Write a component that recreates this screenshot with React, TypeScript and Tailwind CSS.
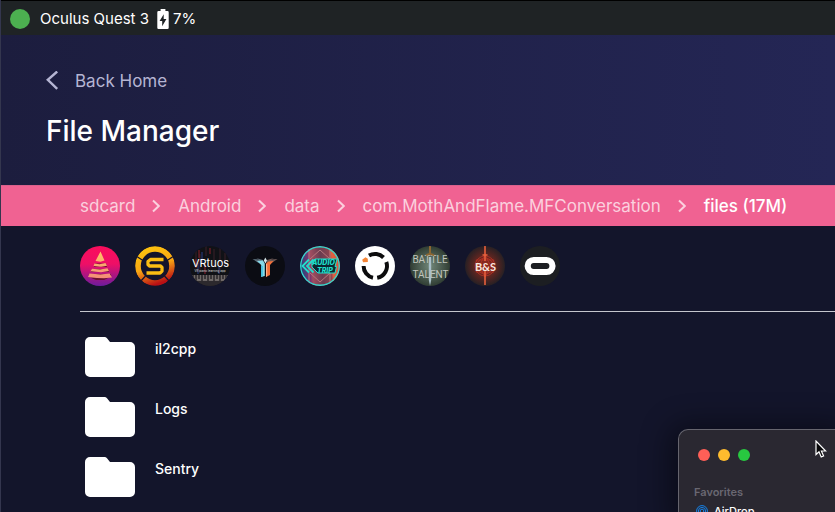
import type { ReactNode } from "react";

const crumbs = ["sdcard", "Android", "data", "com.MothAndFlame.MFConversation"];
const folders = ["il2cpp", "Logs", "Sentry"];

function Chevron() {
  return (
    <svg viewBox="0 0 8 14" className="h-3.5 w-2 shrink-0" fill="none" stroke="#fbd0de" strokeWidth="2" aria-hidden="true">
      <path d="M1 1.5 6.8 7 1 12.5" />
    </svg>
  );
}

function BatteryIcon() {
  return (
    <svg viewBox="0 0 12 20" className="h-5 w-3 shrink-0" aria-hidden="true">
      <path
        fill="#fff"
        fillRule="evenodd"
        d="M3.6 0h4.8v2h2.1a1.2 1.2 0 0 1 1.2 1.2v15.6a1.2 1.2 0 0 1-1.2 1.2h-9a1.2 1.2 0 0 1-1.2-1.2V3.2A1.2 1.2 0 0 1 1.5 2h2.1zM6.700 5.200 2.600 12H5.200v5.200L9.400 10H6.700z"
      />
    </svg>
  );
}

function FolderIcon() {
  return (
    <svg viewBox="0 0 50 40" className="h-10 w-[50px] shrink-0" aria-hidden="true">
      <path fill="#fff" d="M5 0h14.500q1.500 0 2.500 1.200L25 5h20a5 5 0 0 1 5 5v25a5 5 0 0 1-5 5H5a5 5 0 0 1-5-5V5a5 5 0 0 1 5-5z" />
    </svg>
  );
}

const apps: { name: string; art: ReactNode }[] = [
  {
    name: "Pyramid",
    art: (
      <>
        <defs>
          <linearGradient id="pyrBg" x1="0" y1="0" x2="0" y2="1">
            <stop offset="0" stopColor="#fb0d5c" />
            <stop offset=".45" stopColor="#ee0f66" />
            <stop offset="1" stopColor="#6d1b9c" />
          </linearGradient>
          <linearGradient id="pyrFg" x1="0" y1="0" x2="0" y2="1">
            <stop offset="0" stopColor="#ffc465" />
            <stop offset="1" stopColor="#f48b78" />
          </linearGradient>
        </defs>
        <rect width="40" height="40" fill="url(#pyrBg)" />
        <path fill="#6a1230" d="M15 17.500h11l1 3.500-7-.5-6 .5zM12 23h16l1 3-9-.5-9 .5zM9.500 28h21l1 1.500-11 1-12-.5zM10 31.500l20-.5-6 3h-8z" />
        <path fill="url(#pyrFg)" d="m20.500 5.500 4 9-4 1.300-5-.8zM14.500 17.500l5 .8 6-1.300 1.500 2.700-6 1-7.500-.7zM12 22.800l8 .7 7.500-1.200 1.500 2.700-8 1.200-10.500-.9zM9.500 27.500l11 1 9-1 2.500 4-8 .8-7-.4-9-.9z" />
      </>
    ),
  },
  {
    name: "Synth",
    art: (
      <>
        <defs>
          <linearGradient id="synRing" x1=".3" y1="0" x2=".65" y2="1">
            <stop offset="0" stopColor="#fdc00f" />
            <stop offset=".5" stopColor="#f9a613" />
            <stop offset="1" stopColor="#b90f14" />
          </linearGradient>
        </defs>
        <rect width="40" height="40" fill="#15142b" />
        <circle cx="20" cy="20" r="17" fill="none" stroke="url(#synRing)" strokeWidth="5.600" />
        <path d="m1 10 7 4.500M39 10l-7 4.500M5 36l5.500-6M35 36l-5.500-6" stroke="#15142b" strokeWidth="1.300" />
        <path fill="none" stroke="#fcbd13" strokeWidth="3.300" strokeLinejoin="round" d="M28.500 13.500H15.500L13 15.500v3l1.500 1.500h11L27 21.500v3.500l-2 2H11.500" />
      </>
    ),
  },
  {
    name: "VRtuos",
    art: (
      <>
        <rect width="40" height="40" fill="#101116" />
        <path d="M6 2v19M10 8v18M16 0v10M24 3v18M30 1v24M35 7v13" stroke="#3b2128" strokeWidth="1" />
        <path d="M9 4v8M15 18v10M6 13v9M20 2v6" stroke="#8e2029" strokeWidth="1" />
        <path d="M12 6v11M8 17v11M29 21v7" stroke="#263f83" strokeWidth="1" />
        <rect y="29" width="40" height="6" fill="#6f6968" />
        <path d="M3 29v4M6 29v6M9 29v4M12 29v6M15 29v4M18 29v6M21 29v4M24 29v6M27 29v4M30 29v6M33 29v4M36 29v6" stroke="#242225" strokeWidth="1.400" />
        <path d="M0 35h40v5H0z" fill="#2c292d" />
        <text x="20.500" y="21" textAnchor="middle" fontFamily="Inter, sans-serif" fontSize="11" fill="#fff">VRtuos</text>
        <text x="20" y="25.500" textAnchor="middle" fontFamily="Inter, sans-serif" fontSize="3" fill="#ddd">VR piano learning app</text>
      </>
    ),
  },
  {
    name: "Twin Blades",
    art: (
      <>
        <rect width="40" height="40" fill="#0b0c13" />
        <path fill="#5b6d79" d="m7.500 13 6.500.5-3-1.500 7 2 .5 4-5-1z" />
        <path fill="#6e5a56" d="m32.500 13-6.500.5 3-1.500-7 2-.5 4 5-1z" />
        <path fill="#86d9e8" d="m12 15 6-.5 1.800 3V30l-3.600 1V19z" />
        <path fill="#f3703a" d="m28.500 15-5 .5-2.500 2V31l4-2V19z" />
        <path fill="#3fc3e4" d="M16.200 20h1.600v10l-1.600 1z" />
        <path fill="#ffb089" d="M21 18h1.200v12L21 31z" />
        <path fill="#d6e5e8" d="m20.300 11.500 1.700 3-1.500 3-1.700-3z" />
      </>
    ),
  },
  {
    name: "Audio Trip",
    art: (
      <>
        <defs>
          <linearGradient id="audBg" x1="0" y1=".2" x2="1" y2=".1">
            <stop offset="0" stopColor="#27427c" />
            <stop offset=".2" stopColor="#7c3570" />
            <stop offset=".26" stopColor="#a04d60" />
            <stop offset=".5" stopColor="#6a3c50" />
            <stop offset=".72" stopColor="#8c4450" />
            <stop offset=".78" stopColor="#e0603f" />
            <stop offset="1" stopColor="#d8503f" />
          </linearGradient>
        </defs>
        <rect width="40" height="40" fill="url(#audBg)" />
        <path d="M9 0v40M30 0v40M10 13 20 4l10 9M10 27l10 9 10-9" fill="none" stroke="#b6777d" strokeWidth="1" />
        <path fill="#0c2630" stroke="#20dfcc" strokeWidth="1" d="m12 17 3-4h22l-2 7.500h1.500l-1.500 6.500H18l-6-6z" />
        <path d="m9 13.500-6.500 6.500 6.500 6.500M13.500 13.500l-6.500 6.500 6.500 6.500" fill="none" stroke="#20dfcc" strokeWidth="1.800" />
        <g fontFamily="Inter, sans-serif" fontWeight="800" fontStyle="italic" fontSize="7" fill="#20dfcc">
          <text x="12" y="19">AUDIO</text>
          <text x="17" y="27">TRIP</text>
        </g>
        <circle cx="20" cy="20" r="19.300" fill="none" stroke="#34d7cc" strokeWidth="1.400" />
      </>
    ),
  },
  {
    name: "Ring",
    art: (
      <>
        <rect width="40" height="40" fill="#fff" />
        <g fill="none" stroke="#0c0c0d" strokeWidth="4">
          <path d="M14 9.600A12 12 0 0 1 28.500 11.500" />
          <path d="M31.300 16A12 12 0 0 1 22.200 31.800" />
          <path d="M18 31.800A12 12 0 0 1 8.600 20" />
        </g>
        <path fill="#f58434" d="m10.500 11.300 2.300 1.500v3.200l-4.800.2-.8-2.400z" />
      </>
    ),
  },
  {
    name: "Battle Talent",
    art: (
      <>
        <defs>
          <radialGradient id="batBg">
            <stop offset="0" stopColor="#718779" />
            <stop offset="1" stopColor="#303d33" />
          </radialGradient>
        </defs>
        <rect width="40" height="40" fill="url(#batBg)" />
        <g fontFamily="Roboto, sans-serif" fontSize="10" fill="#c0c5bd" textAnchor="middle">
          <text x="20" y="17">BATTLE</text>
          <text x="20.500" y="32">TALENT</text>
        </g>
        <path d="M18.800 11h2.400v23L20 40l-1.200-6z" fill="#a9bfc9" />
        <path d="M20 0v9M16 9.500q4-3 8 0" stroke="#8c6631" strokeWidth="2" fill="none" />
      </>
    ),
  },
  {
    name: "Blade and Sorcery",
    art: (
      <>
        <defs>
          <radialGradient id="bsBg">
            <stop offset="0" stopColor="#a12b1c" />
            <stop offset=".5" stopColor="#632620" />
            <stop offset="1" stopColor="#272024" />
          </radialGradient>
        </defs>
        <rect width="40" height="40" fill="url(#bsBg)" />
        <g fill="none" stroke="#bd3425" strokeWidth=".7">
          <circle cx="20" cy="20" r="10" />
          <circle cx="20" cy="20" r="8" />
          <path d="m20 9 9 17H11zM20 31l9-17H11z" />
        </g>
        <path d="M20 0v15M20 25v14M17.500 9h5" stroke="#e7603d" strokeWidth="1.600" />
        <text x="20.500" y="24.500" textAnchor="middle" fontFamily="Lato, sans-serif" fontSize="11" fontWeight="700" fill="#f8e7df">B&amp;S</text>
      </>
    ),
  },
  {
    name: "Oculus",
    art: (
      <>
        <rect width="40" height="40" fill="#1c1e22" />
        <rect x="7.700" y="14" width="24.800" height="12" rx="6" fill="none" stroke="#fff" strokeWidth="6.200" />
      </>
    ),
  },
];

export default function App() {
  return (
    <div className="relative flex min-h-screen flex-col overflow-hidden border-l border-[#34364e] bg-[#13152b] font-['Inter','Noto_Sans',sans-serif] text-white">
      <header className="flex h-[35px] items-center border-t border-black bg-[#1f2325] pt-0.5 pl-[9px] text-[15px] leading-5">
        <span className="size-5 shrink-0 rounded-full bg-[#4caf50]" />
        <span className="ml-2.5">Oculus Quest 3</span>
        <span className="ml-2 flex items-center gap-1">
          <BatteryIcon />
          <span>7%</span>
        </span>
      </header>

      <section className="flex h-[150px] flex-col items-start bg-linear-to-r from-[#1c1d3e] to-[#242655] pt-8 pl-[45px]">
        <a href="#home" className="flex items-center gap-4 text-[17px] leading-7 text-[#b5b5d3]">
          <svg viewBox="0 0 13 20" className="h-5 w-[13px]" fill="none" stroke="currentColor" strokeWidth="2.400" aria-hidden="true">
            <path d="M11.200 0.500 1.800 8.800l9.400 9" />
          </svg>
          Back Home
        </a>
        <h1 className="mt-4 text-[28px] leading-10 font-medium">File Manager</h1>
      </section>

      <nav aria-label="Breadcrumb" className="-ml-px flex h-[41px] shrink-0 items-center gap-[18px] border-t border-[#d9608c] bg-[#f06292] pl-20 text-[17px] leading-6 whitespace-nowrap text-[#fbd0de]">
        {crumbs.map((crumb) => (
          <span key={crumb} className="flex items-center gap-[17px]">
            <a href={`#${crumb}`}>{crumb}</a>
            <Chevron />
          </span>
        ))}
        <span aria-current="page" className="font-medium text-white">files (17M)</span>
      </nav>

      <main className="pt-5 pl-[79px]">
        <div className="flex gap-[15px] border-b border-[#c5c6ce] pb-[25px]">
          {apps.map((app) => (
            <button key={app.name} type="button" aria-label={app.name} className="size-10 shrink-0 overflow-hidden rounded-full">
              <svg viewBox="0 0 40 40" className="size-10" aria-hidden="true">{app.art}</svg>
            </button>
          ))}
        </div>
        <ul className="flex flex-col gap-5 pt-[25px] pb-[15px] pl-[5px]">
          {folders.map((folder) => (
            <li key={folder}>
              <a href={`#${folder}`} className="flex items-start gap-5 text-sm leading-6 font-medium">
                <FolderIcon />
                <span>{folder}</span>
              </a>
            </li>
          ))}
        </ul>
      </main>

      <aside className="absolute right-0 bottom-0 h-[83px] w-[157px] overflow-hidden rounded-tl-[10px] border-t border-l border-[#66656e] bg-[#2a2831] pt-[19px] pl-[19px] shadow-[0_4px_28px_10px_rgba(0,0,0,0.4)]">
        <div className="flex gap-2">
          <button type="button" aria-label="Close" className="size-3 rounded-full bg-[#ff5f57]" />
          <button type="button" aria-label="Minimize" className="size-3 rounded-full bg-[#febc2e]" />
          <button type="button" aria-label="Zoom" className="size-3 rounded-full bg-[#28c840]" />
        </div>
        <div className="-ml-1 pt-[23px] text-[11px] leading-4">
          <h2 className="font-semibold text-[#696771]">Favorites</h2>
          <a href="#airdrop" className="flex items-center gap-1.5 pt-[3px] pl-0.5 font-medium">
            <svg viewBox="0 0 12 12" className="size-3" fill="none" stroke="#1682e8" strokeWidth="1" aria-hidden="true">
              <circle cx="6" cy="6" r="5.400" />
              <circle cx="6" cy="6" r="3.600" />
              <circle cx="6" cy="6" r="1.800" />
            </svg>
            AirDrop
          </a>
        </div>
        <svg viewBox="0 0 12 18" className="absolute top-2.5 right-2 h-[18px] w-3" aria-hidden="true">
          <path d="M1 1v13.500l3-2.800 2.200 5.300 2.400-1-2.200-5h4.300z" fill="#08080a" stroke="#fff" strokeWidth="1.200" />
        </svg>
      </aside>
    </div>
  );
}
